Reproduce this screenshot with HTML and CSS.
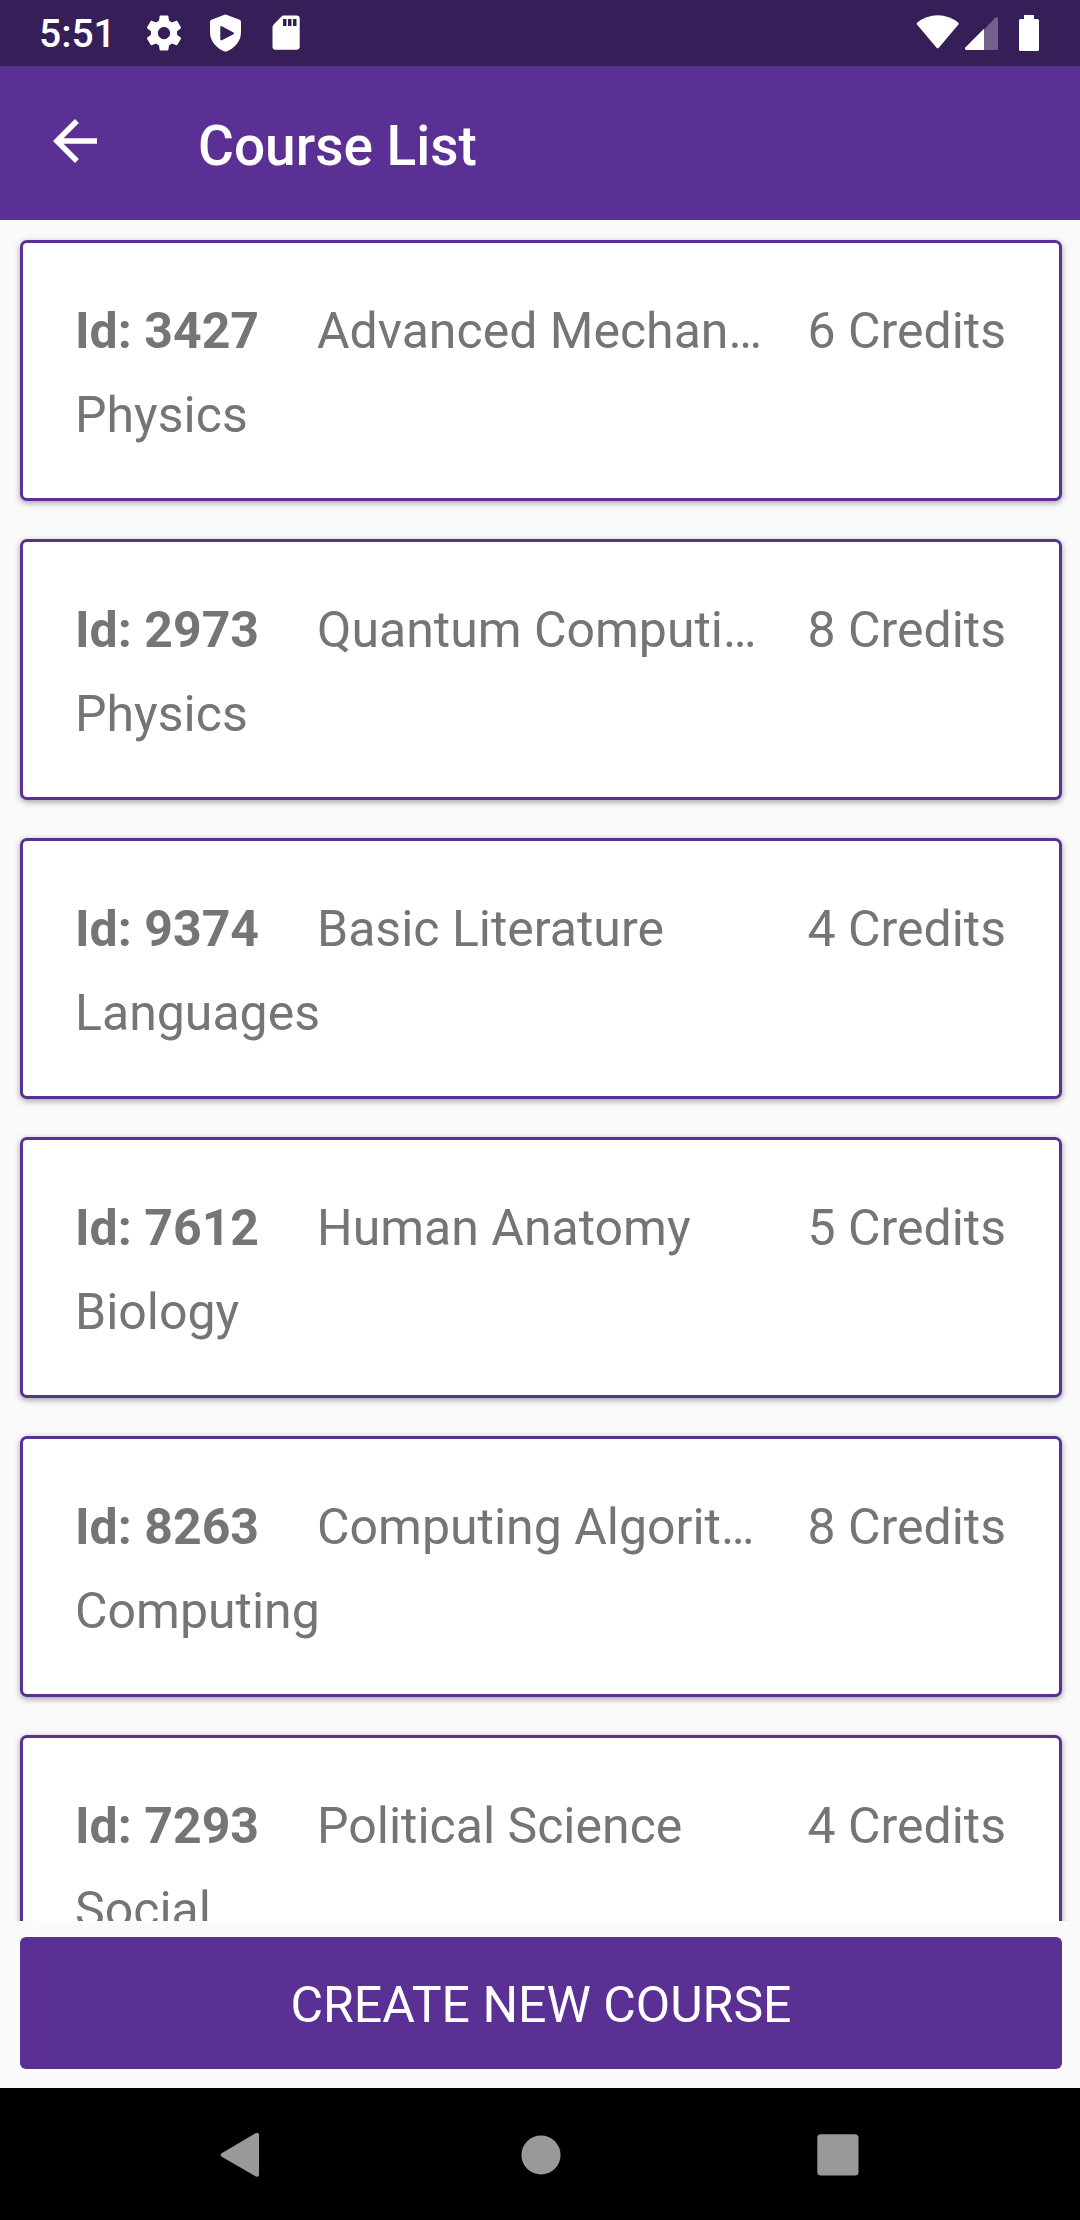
FILE: index.html
```html
<!DOCTYPE html>
<html lang="en">
<head>
<meta charset="utf-8">
<title>Course List</title>
<link rel="stylesheet" href="styles.css">
</head>
<body>
<div class="screen">
  <div class="status-bar">
    <span class="clock">5:51</span>
    <svg class="gear" width="42" height="42" viewBox="0 0 24 24"><path d="M19.43 12.98c.04-.32.07-.64.07-.98s-.03-.66-.07-.98l2.11-1.65c.19-.15.24-.42.12-.64l-2-3.46c-.12-.22-.39-.3-.61-.22l-2.49 1c-.52-.4-1.08-.73-1.69-.98l-.38-2.65C14.46 2.18 14.25 2 14 2h-4c-.25 0-.46.18-.49.42l-.38 2.65c-.61.25-1.17.59-1.69.98l-2.49-1c-.23-.09-.49 0-.61.22l-2 3.46c-.13.22-.07.49.12.64l2.11 1.65c-.04.32-.07.65-.07.98s.03.66.07.98l-2.11 1.65c-.19.15-.24.42-.12.64l2 3.46c.12.22.39.3.61.22l2.49-1c.52.4 1.08.73 1.69.98l.38 2.65c.03.24.24.42.49.42h4c.25 0 .46-.18.49-.42l.38-2.65c.61-.25 1.17-.59 1.69-.98l2.49 1c.23.09.49 0 .61-.22l2-3.46c.12-.22.07-.49-.12-.64l-2.11-1.65zM12 15.5c-1.93 0-3.5-1.57-3.5-3.5s1.570-3.500 3.500-3.500 3.500 1.570 3.500 3.500-1.570 3.500-3.500 3.500z"/></svg>
    <svg class="shield" width="32" height="38" viewBox="0 0 32 38"><path fill-rule="evenodd" d="M14.600.700a2.500 2.500 0 0 1 1.800 0L29.600 5.700Q31 6.300 31 7.800V18C31 27.500 24.500 34.500 15.500 37.800 6.500 34.500 0 27.500 0 18V7.800Q0 6.300 1.400 5.700ZM10.300 13V25.200Q10.300 26.800 11.800 26.200L23.500 20.200Q24.800 19.300 23.500 18.500L11.800 12.300Q10.300 11.700 10.300 13Z"/></svg>
    <svg class="sd" width="28" height="36" viewBox="0 0 28 36"><path fill-rule="evenodd" d="M11.500.500H24.500Q27.700.500 27.700 3.500V31.500Q27.700 34.700 24.500 34.700H3.500Q.500 34.700.500 31.500V12.500Q.500 10.800 1.500 9.800L9.500 1.500Q10.300.500 11.500.500ZM11 4V11H14.500V4ZM16 4V11H19.500V4ZM21 4V11H24.500V4Z"/></svg>
    <svg class="system" width="124" height="40" viewBox="915 13 124 40">
      <path d="M917 22.800Q926 15.200 937.700 15.200T958.400 22.800Q959 23.700 958.400 24.500L938.600 48Q937.700 48.800 936.800 48L917 24.500Q916.400 23.700 917 22.800Z"/>
      <path opacity=".3" d="M984 29.500 995.500 17.600Q998 16 998 18.500V48.500Q998 50 996.500 50H984Z"/>
      <path d="M984 28.700V50H966.500Q964.300 49.600 965.300 47.500Z"/>
      <path d="M1024 15H1034V19H1037.500Q1039 19 1039 20.500V49.500Q1039 51 1037.500 51H1020.500Q1019 51 1019 49.500V20.500Q1019 19 1020.500 19H1024Z"/>
    </svg>
  </div>
  <header class="app-bar">
    <svg class="back" width="66" height="66" viewBox="0 0 24 24"><path d="M20 11H7.830l5.590-5.590L12 4l-8 8 8 8 1.410-1.410L7.830 13H20v-2z"/></svg>
    <h1 class="title">Course List</h1>
  </header>
  <main class="course-list">
    <article class="card"><div class="row"><b class="id">Id: 3427</b><span class="name">Advanced Mechan…</span><span class="credits">6 Credits</span></div><div class="department">Physics</div></article>
    <article class="card"><div class="row"><b class="id">Id: 2973</b><span class="name">Quantum Computi…</span><span class="credits">8 Credits</span></div><div class="department">Physics</div></article>
    <article class="card"><div class="row"><b class="id">Id: 9374</b><span class="name">Basic Literature</span><span class="credits">4 Credits</span></div><div class="department">Languages</div></article>
    <article class="card"><div class="row"><b class="id">Id: 7612</b><span class="name">Human Anatomy</span><span class="credits">5 Credits</span></div><div class="department">Biology</div></article>
    <article class="card"><div class="row"><b class="id">Id: 8263</b><span class="name">Computing Algorit…</span><span class="credits">8 Credits</span></div><div class="department">Computing</div></article>
    <article class="card"><div class="row"><b class="id">Id: 7293</b><span class="name">Political Science</span><span class="credits">4 Credits</span></div><div class="department">Social</div></article>
  </main>
  <div class="actions"><button class="create">CREATE NEW COURSE</button></div>
  <nav class="nav-bar">
    <svg width="40" height="46" viewBox="0 0 40 46"><path d="M35.500 1.200Q39 -.500 39 3V42.500Q39 46 35.500 44.300L1.700 24.800Q-.500 23 1.700 21.200Z"/></svg>
    <svg class="home" width="40" height="40" viewBox="0 0 40 40"><circle cx="20" cy="20" r="19.600"/></svg>
    <svg width="42" height="42" viewBox="0 0 42 42"><rect x=".300" y=".300" width="41.200" height="41.200" rx="3.500"/></svg>
  </nav>
</div>
</body>
</html>
```
FILE: styles.css
```css
* { box-sizing: border-box; }
body {
  margin: 0;
  font-family: Roboto, "Liberation Sans", sans-serif;
  background: #fafafa;
}
svg { display: block; fill: #fff; flex: none; }
.screen {
  width: 1080px;
  height: 2220px;
  display: flex;
  flex-direction: column;
  overflow: hidden;
}
.status-bar {
  height: 66px;
  flex: none;
  background: #361e58;
  display: flex;
  align-items: center;
  padding: 0 41px 0 39px;
}
.clock {
  width: 104px;
  color: #fff;
  font-size: 39px;
  font-weight: 500;
  line-height: 66px;
  padding-top: 2px;
}
.shield { margin-left: 25px; }
.sd { margin-left: 30px; }
.system { margin-left: auto; }
.app-bar {
  height: 154px;
  flex: none;
  background: #5a3095;
  display: flex;
  align-items: center;
  padding: 0 42px;
}
.back { margin-bottom: 4px; }
.title {
  margin: 0 0 0 90px;
  padding-top: 5px;
  color: #fff;
  font-size: 55px;
  font-weight: 500;
  line-height: 64px;
}
.course-list {
  height: 1701px;
  flex: none;
  overflow: hidden;
  padding: 20px 18px 0 20px;
  display: flex;
  flex-direction: column;
  gap: 38px;
}
.card {
  height: 261px;
  flex: none;
  border: 3px solid #5a3095;
  border-radius: 7px;
  background: #fff;
  box-shadow: 0 2px 6px rgba(0, 0, 0, .36);
  padding: 46px 53px 0 52px;
  color: #757575;
  font-size: 50px;
  line-height: 84px;
}
.row { display: flex; }
.id { width: 242px; }
.name { flex: 1; white-space: nowrap; }
.credits { white-space: nowrap; }
.actions { height: 167px; flex: none; padding: 16px 18px 0 20px; }
.create {
  display: block;
  width: 100%;
  height: 132px;
  border: 0;
  border-radius: 6px;
  background: #5a3095;
  color: #fff;
  font: 400 50px/60px Roboto, "Liberation Sans", sans-serif;
  padding: 3px 0 0;
}
.nav-bar {
  flex: 1;
  background: #000;
  display: flex;
  align-items: center;
  justify-content: space-between;
  padding: 1px 221px 0 220px;
}
.nav-bar svg { fill: #999; }
.home { margin-left: 4px; }
```
